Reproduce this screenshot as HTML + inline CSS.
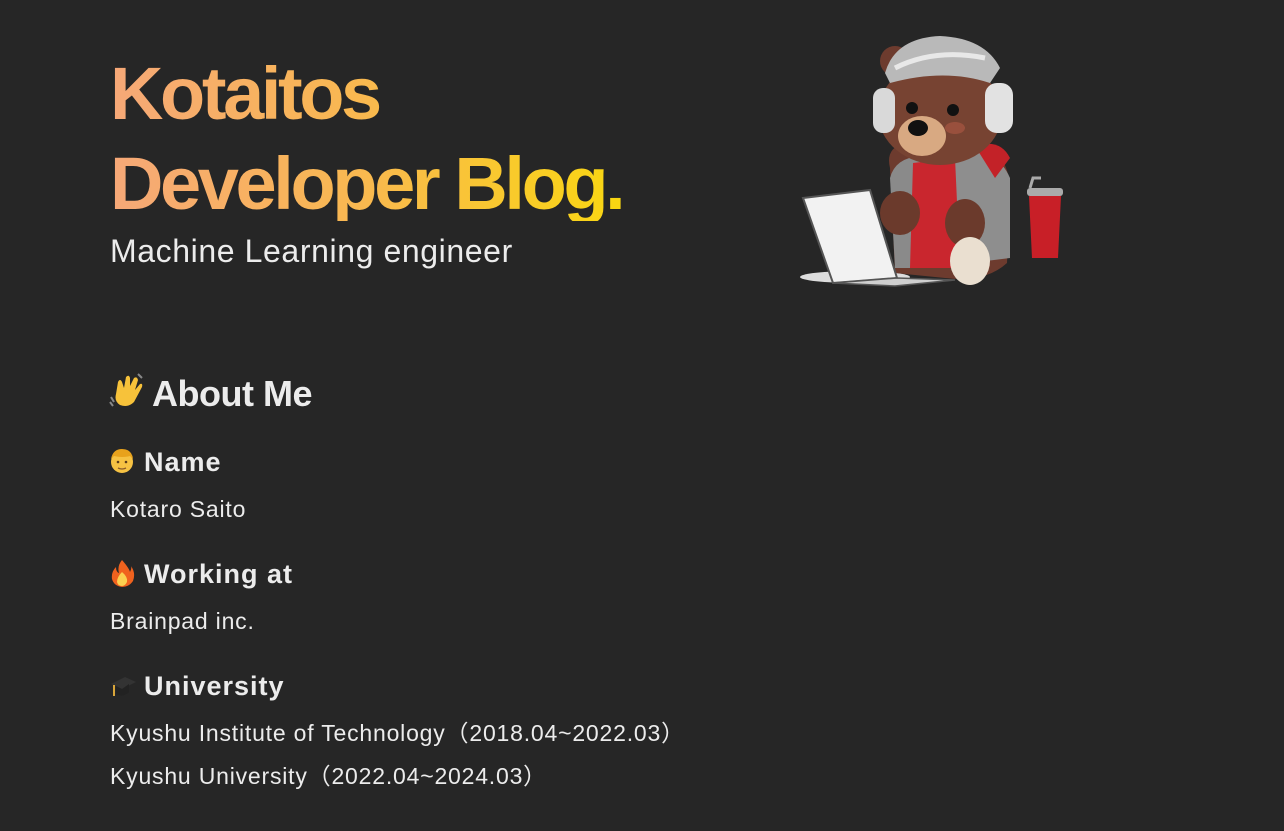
<!DOCTYPE html>
<html><head><meta charset="utf-8">
<style>
html,body{margin:0;padding:0;background:#262626;width:1284px;height:831px;overflow:hidden;font-family:"Liberation Sans","Noto Sans CJK JP",sans-serif;color:#ececec}
.t{position:absolute;white-space:nowrap}
.title{font-size:74px;font-weight:bold;line-height:74px;letter-spacing:-3.4px;background:linear-gradient(90deg,#f6a878 0%,#f9b94e 50%,#f9d80f 100%);-webkit-background-clip:text;background-clip:text;color:transparent;width:520px}
.sub{font-size:32px;line-height:32px;color:#ececec;letter-spacing:0.6px}
.h2{font-size:36px;line-height:36px;font-weight:bold;letter-spacing:-0.5px}
.h3{font-size:27px;line-height:27px;font-weight:bold;letter-spacing:1px}
.p{font-size:23px;line-height:23px;letter-spacing:0.8px}
</style></head><body>
<div class="t title" style="left:110px;top:57px">Kotaitos<br><span style="display:inline-block;margin-top:16px">Developer Blog.</span></div>
<div class="t sub" style="left:110px;top:235px">Machine Learning engineer</div>

<svg class="t" style="left:108px;top:372px" width="40" height="38" viewBox="0 0 40 38"><path d="M8 22 L10 10 Q12 6 14 10 L16 16 L18 5 Q21 2 22 6 L22 14 L26 6 Q29 4 30 8 L27 18 L32 12 Q35 11 34 15 L26 30 Q20 36 12 33 Q6 29 8 22Z" fill="#f7c23a"/><path d="M3 25 L6 30 M2 30 L5 34 M30 2 L34 6" stroke="#888" stroke-width="2"/></svg>
<div class="t h2" style="left:152px;top:375.5px">About Me</div>

<svg class="t" style="left:109px;top:447px" width="28" height="28" viewBox="0 0 28 28"><circle cx="13" cy="15" r="11" fill="#f6c243"/><path d="M2 12 Q4 2 13 2 Q23 2 24 12 L21 9 Q13 11 5 9Z" fill="#e8a21c"/><circle cx="9" cy="15" r="1.3" fill="#5a3a1a"/><circle cx="17" cy="15" r="1.3" fill="#5a3a1a"/><path d="M9 21 Q13 23 17 21" stroke="#8a5a2a" stroke-width="1.3" fill="none"/></svg>
<div class="t h3" style="left:144px;top:449px">Name</div>
<div class="t p" style="left:110px;top:497.5px">Kotaro Saito</div>

<svg class="t" style="left:109px;top:558px" width="28" height="30" viewBox="0 0 28 30"><path d="M13 2 Q20 10 21 14 Q23 10 22 8 Q27 15 24 23 Q20 29 13 29 Q5 28 3 21 Q2 14 7 9 Q7 14 10 15 Q8 8 13 2Z" fill="#f0621e"/><path d="M13 14 Q19 19 18 24 Q16 28 13 28 Q9 28 8 24 Q8 19 13 14Z" fill="#fbd050"/></svg>
<div class="t h3" style="left:144px;top:561px">Working at</div>
<div class="t p" style="left:110px;top:609.5px">Brainpad inc.</div>

<svg class="t" style="left:109px;top:672px" width="28" height="28" viewBox="0 0 28 28"><path d="M2 12 L16 5 L27 10 L13 17Z" fill="#333"/><path d="M7 14 L7 22 Q14 26 20 20 L20 12 L13 17Z" fill="#222"/><path d="M5 13 L5 24" stroke="#d9a63a" stroke-width="2"/></svg>
<div class="t h3" style="left:144px;top:673px">University</div>
<div class="t p" style="left:110px;top:721.5px">Kyushu Institute of Technology（2018.04~2022.03）</div>
<div class="t p" style="left:110px;top:764.5px">Kyushu University（2022.04~2024.03）</div>

<svg class="t" style="left:795px;top:28px" width="270" height="265" viewBox="0 0 270 265">
  <ellipse cx="60" cy="249" rx="55" ry="6" fill="#ddd"/>
  <path d="M95 140 Q90 120 110 115 L185 115 Q215 125 215 165 L212 235 Q190 255 150 250 L100 245Z" fill="#6d3b2e"/>
  <path d="M95 150 Q100 130 125 128 L130 240 L100 240Z" fill="#8a8a8a"/>
  <path d="M150 125 Q200 115 215 150 L215 230 L175 235 L155 170Z" fill="#8e8e8e"/>
  <path d="M118 135 L160 130 L165 240 L115 240Z" fill="#c9262e"/>
  <path d="M180 118 Q205 110 215 130 L200 150 Z" fill="#c32228"/>
  <ellipse cx="105" cy="185" rx="20" ry="22" fill="#6b3a2c"/>
  <ellipse cx="170" cy="195" rx="20" ry="24" fill="#6b3a2c"/>
  <ellipse cx="175" cy="233" rx="20" ry="24" fill="#eadfd0"/>
  <circle cx="100" cy="33" r="15" fill="#6d3b2e"/>
  <circle cx="185" cy="38" r="15" fill="#6d3b2e"/>
  <circle cx="187" cy="40" r="8" fill="#c68f73"/>
  <ellipse cx="145" cy="85" rx="62" ry="52" fill="#774332"/>
  <path d="M90 45 Q100 10 145 8 Q190 10 205 40 L195 55 Q150 40 95 55Z" fill="#b9b9b9"/>
  <path d="M100 40 Q140 20 190 30" stroke="#e8e8e8" stroke-width="5" fill="none"/>
  <ellipse cx="127" cy="108" rx="24" ry="20" fill="#d8a982"/>
  <ellipse cx="123" cy="100" rx="10" ry="8" fill="#111"/>
  <circle cx="117" cy="80" r="6" fill="#111"/>
  <circle cx="158" cy="82" r="6" fill="#111"/>
  <ellipse cx="160" cy="100" rx="10" ry="6" fill="#b05a45" opacity=".6"/>
  <rect x="78" y="60" width="22" height="45" rx="10" fill="#d9d9d9"/>
  <rect x="190" y="55" width="28" height="50" rx="12" fill="#e2e2e2"/>
  <path d="M8 170 L75 162 L102 250 L38 255Z" fill="#f2f2f2" stroke="#555" stroke-width="2"/>
  <path d="M38 255 L102 250 L160 252 L100 258Z" fill="#cfcfcf" stroke="#555" stroke-width="1.5"/>
  <path d="M235 160 L238 150 L246 150" stroke="#aaa" stroke-width="3" fill="none"/>
  <rect x="232" y="160" width="36" height="8" rx="3" fill="#aaa"/>
  <path d="M234 168 L266 168 L263 230 L237 230Z" fill="#c81f27"/>
</svg>
</body></html>
